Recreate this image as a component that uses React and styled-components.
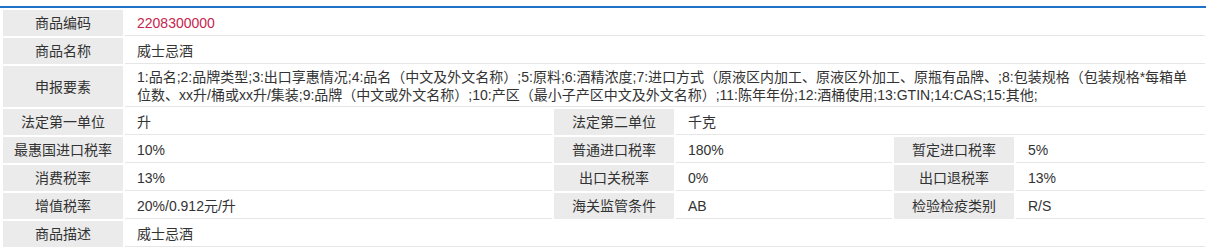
import React from "react";
import styled, { createGlobalStyle } from "styled-components";

const Global = createGlobalStyle`
  html, body { margin: 0; padding: 0; background: #fff; }
  body { font-family: "Liberation Sans", "Noto Sans CJK SC", sans-serif; font-size: 14px; color: #333; }
`;

const Panel = styled.div`
  width: 1206px;
  margin-top: 6px;
  border-top: 2px solid #1e73c8;
`;

const Table = styled.table`
  width: 1206px;
  table-layout: fixed;
  border-collapse: separate;
  border-spacing: 2px;
  margin-left: 1px;
`;

const Row = styled.tr`
  height: 26px;
`;

const Label = styled.th`
  background: #ebebeb;
  font-weight: normal;
  text-align: center;
  color: #333;
  padding: 2px 4px;
  line-height: 18px;
  white-space: nowrap;
`;

const Value = styled.td`
  padding: 2px 12px 2px 12px;
  line-height: 18px;
  border-bottom: 1px solid #e6e6e6;
  color: ${(p) => (p.$accent ? "#c7254e" : "#333")};
  text-align: left;
  vertical-align: middle;
`;

const rows = [
  { label: "商品编码", value: "2208300000", accent: true },
  { label: "商品名称", value: "威士忌酒" },
  {
    label: "申报要素",
    value:
      "1:品名;2:品牌类型;3:出口享惠情况;4:品名（中文及外文名称）;5:原料;6:酒精浓度;7:进口方式（原液区内加工、原液区外加工、原瓶有品牌、;8:包装规格（包装规格*每箱单位数、xx升/桶或xx升/集装;9:品牌（中文或外文名称）;10:产区（最小子产区中文及外文名称）;11:陈年年份;12:酒桶使用;13:GTIN;14:CAS;15:其他;",
  },
];

const triples = [
  [["最惠国进口税率", "10%"], ["普通进口税率", "180%"], ["暂定进口税率", "5%"]],
  [["消费税率", "13%"], ["出口关税率", "0%"], ["出口退税率", "13%"]],
  [["增值税率", "20%/0.912元/升"], ["海关监管条件", "AB"], ["检验检疫类别", "R/S"]],
];

export default function App() {
  return (
    <>
      <Global />
      <Panel>
        <Table>
          <colgroup>
            <col style={{ width: 120 }} />
            <col style={{ width: 427 }} />
            <col style={{ width: 120 }} />
            <col style={{ width: 216 }} />
            <col style={{ width: 120 }} />
            <col style={{ width: 189 }} />
          </colgroup>
          <tbody>
            {rows.map((r) => (
              <Row key={r.label}>
                <Label>{r.label}</Label>
                <Value colSpan={5} $accent={r.accent}>{r.value}</Value>
              </Row>
            ))}
            <Row>
              <Label>法定第一单位</Label>
              <Value>升</Value>
              <Label>法定第二单位</Label>
              <Value colSpan={3}>千克</Value>
            </Row>
            {triples.map((t, i) => (
              <Row key={i}>
                {t.map(([l, v]) => (
                  <React.Fragment key={l}>
                    <Label>{l}</Label>
                    <Value>{v}</Value>
                  </React.Fragment>
                ))}
              </Row>
            ))}
            <Row>
              <Label>商品描述</Label>
              <Value colSpan={5}>威士忌酒</Value>
            </Row>
          </tbody>
        </Table>
      </Panel>
    </>
  );
}
